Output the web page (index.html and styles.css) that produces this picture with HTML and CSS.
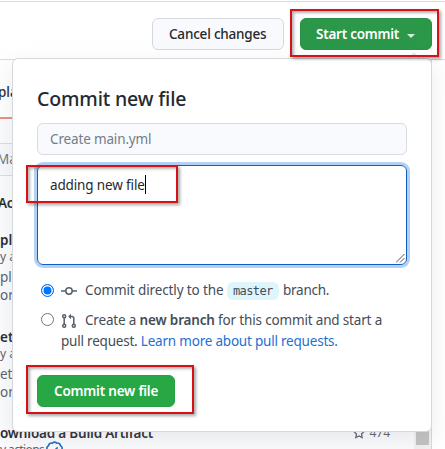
FILE: index.html
```html
<!DOCTYPE html>
<html lang="en">
<head>
<meta charset="utf-8">
<title>Commit new file</title>
<link rel="stylesheet" href="styles.css">
</head>
<body>
<header class="toolbar">
  <button class="btn"><span class="t-cancel">Cancel changes</span></button>
  <button class="btn primary start"><span class="t-start">Start commit</span><i class="caret"></i></button>
</header>
<main class="sidebar">
  <div class="tab">pla</div>
  <div class="search">Ma</div>
  <h3 class="section">Act</h3>
  <article class="item first"><h4>ple</h4><small>y a</small><p>ple<br>or</p></article>
  <article class="item second"><h4>etu</h4><small>y a</small><p>et<br>om</p></article>
  <article class="download">
    <div class="row"><h4>ownload a Build Artifact</h4>
      <span class="stars"><svg width="12" height="12" viewBox="0 0 16 16"><path d="M8 1l2.1 4.3 4.7.7-3.4 3.3.8 4.7L8 11.8 3.8 14l.8-4.7L1.2 6l4.7-.7z" fill="none" stroke="#586069" stroke-width="1.7"/></svg>474</span></div>
    <div class="by"><span>y actions</span><svg width="17" height="17" viewBox="0 0 16 16" fill="none" stroke="#2468c8" stroke-width="1.5"><path d="M6 2Q8 0 10 2Q13 1.6 13.7 4.5Q16 6 14.8 8Q16 10 13.7 11.5Q13 14.4 10 14Q8 16 6 14Q3 14.4 2.3 11.5Q0 10 1.2 8Q0 6 2.3 4.5Q3 1.6 6 2Z"/><path d="M5 8l2 2 4-4"/></svg></div>
  </article>
  <div class="scroll"><i></i></div>
</main>
<section class="popover">
  <h2><span>Commit new file</span></h2>
  <div class="field"><span>Create main.yml</span></div>
  <div class="area"><span class="typed">adding new file</span><i class="cursor"></i>
    <svg class="grip" width="9" height="9" viewBox="0 0 9 9"><path d="M0 8.5L8.5 0M4 8.5L8.5 4" stroke="#555"/></svg></div>
  <div class="choice direct">
    <i class="radio checked"></i>
    <svg class="icon" width="16" height="16" viewBox="0 0 16 16" fill="none" stroke="#586069" stroke-width="1.5"><circle cx="8" cy="8" r="3.2"/><path d="M0 8h4.8M11.2 8H16"/></svg>
    <span class="t-direct">Commit directly to the</span><code>master</code><span class="t-branch">branch.</span>
  </div>
  <div class="choice create">
    <i class="radio"></i>
    <div>
      <div class="line"><svg class="icon" width="16" height="16" viewBox="0 0 16 16" fill="none" stroke="#586069" stroke-width="1.5"><circle cx="3.2" cy="3.2" r="1.5"/><circle cx="3.2" cy="12.8" r="1.5"/><circle cx="12.8" cy="12.8" r="1.5"/><path d="M3.2 4.8v6.4M12.8 11.2V5.5Q12.8 3.5 10.8 3.5H8"/><path d="M10 .8v5.4L7.2 3.5z" fill="#586069" stroke="none"/></svg><span class="t-create">Create a <b>new branch</b> for this commit and start a</span></div>
      <div class="line"><span class="t-pull">pull request. <a>Learn more about pull requests.</a></span></div>
    </div>
  </div>
  <button class="btn primary commit"><span class="t-commit">Commit new file</span></button>
</section>
<i class="pointer"></i>
<i class="mark mark-start"></i>
<i class="mark mark-text"></i>
<i class="mark mark-commit"></i>
</body>
</html>
```
FILE: styles.css
```css
* { box-sizing: border-box; }
body { margin: 0; width: 445px; height: 449px; overflow: hidden; position: relative; background: #fff; color: #24292e; font: 13.5px/21px "Noto Sans", "Open Sans", sans-serif; }
h2, h3, h4, p { margin: 0; }
span { white-space: nowrap; }
.toolbar { height: 59px; margin-top: 1px; border-top: 1px solid #d9dce3; border-bottom: 1px solid #d9dce3; display: flex; gap: 16px; padding: 16px 0 0 152px; }
.btn { height: 32px; width: 132px; padding: 0 0 0 16px; border: 1px solid #d5d8dc; border-radius: 6px; background: #f8fafd; color: #24292e; font: 500 13.5px/20px "Noto Sans", sans-serif; text-align: left; }
.primary { background: #2a9749; border-color: #298f46; color: #fff; font-weight: 600; }
.start { display: flex; align-items: center; padding-left: 15px; }
.caret { margin: 3px 0 0 8px; border: 4px solid transparent; border-top-color: #d9eddd; border-bottom: 0; }
.t-cancel { letter-spacing: -.2px; }
.t-start { letter-spacing: -.25px; }

.sidebar { position: relative; width: 432px; height: 389px; border-right: 1px solid #d5d8dc; background: #fcfcfe; overflow: hidden; }
.tab { height: 59px; padding-top: 22px; margin-left: -2px; border-bottom: 2px solid #ed8b80; background: #fff; font-weight: 500; }
.search { margin-top: 24px; height: 33px; padding: 5px 0; border: solid #d9dce3; border-width: 1px 0; background: #f8f9fc; color: #6a737d; margin-left: -3px; }
.section { margin: 17px 0 0 -2px; font-size: 13.5px; line-height: 21px; font-weight: 600; letter-spacing: -.2px; }
.item { height: 97px; }
.item h4, .download h4 { font-size: 13.5px; line-height: 18px; font-weight: 600; }
.item small { display: block; font-size: 12px; line-height: 15px; color: #586069; }
.item p { margin-top: 4px; font-size: 13.5px; line-height: 18px; color: #586069; }
.first { margin-top: 17px; }
.download { margin-top: -1px; }
.row { display: flex; justify-content: space-between; padding-right: 41px; }
.row h4 { letter-spacing: -.2px; }
.stars { display: flex; align-items: center; gap: 4px; font-size: 12px; line-height: 18px; color: #586069; }
.by { display: flex; gap: 2px; font-size: 12px; line-height: 15px; color: #586069; letter-spacing: -.6px; }
.by span { width: 44px; }
.by svg { margin-top: -1px; }
.scroll { position: absolute; right: 0; top: 370px; width: 17px; height: 30px; background: #f1f1f1; padding: 0 2px; }
.scroll i { display: block; height: 15px; background: #c1c1c1; }

.popover { position: absolute; left: 12px; top: 58px; width: 420px; height: 374px; padding: 29px 24px 0; border: 1px solid #d5d8dc; border-radius: 6px; background: #fff; box-shadow: 0 8px 24px rgba(149,157,165,.2); }
h2 { height: 35px; font-size: 19.5px; line-height: 22px; font-weight: 500; letter-spacing: -.15px; }
.field { width: 370px; height: 32px; padding: 5px 12px; border: 1px solid #d9dce3; border-radius: 6px; background: #f8fafd; color: #747c85; line-height: 20px; letter-spacing: -.15px; }
.area { position: relative; display: flex; margin-top: 10px; width: 370px; height: 100px; padding: 9px 12px; border: 1px solid #0f5fc9; border-radius: 6px; box-shadow: 0 0 0 3px #b3d1f3; line-height: 20px; }
.typed { letter-spacing: -.14px; }
.cursor { width: 1px; height: 19px; background: #000; }
.grip { position: absolute; right: 1px; bottom: 1px; }
.choice { display: flex; color: #444d56; }
.direct { margin-top: 15px; height: 21px; align-items: center; padding-left: 4px; }
.radio { flex: none; width: 13px; height: 13px; border: 1px solid #767676; border-radius: 50%; margin-right: 7px; }
.checked { border-color: #0075ff; background: #0075ff; box-shadow: inset 0 0 0 1.5px #fff; }
.icon { flex: none; margin-right: 8px; }
.t-direct { width: 138px; letter-spacing: -.12px; }
.t-branch { letter-spacing: -.25px; }
code { width: 52px; height: 18px; padding: 0 6px; margin: 0 4px; border-radius: 6px; background: #dff5fc; color: #444d56; font: 12px/18px "DejaVu Sans Mono", monospace; letter-spacing: -.6px; }
.create { margin-top: 9px; padding-left: 4px; }
.create .radio { margin-top: 3px; }
.t-create { letter-spacing: -.17px; }
.t-pull { letter-spacing: -.21px; }
.line { display: flex; align-items: center; height: 21px; }
.line b { font-weight: 600; }
a { color: #2470d0; }
.commit { display: block; margin-top: 23px; width: 138px; background: #28a745; border-color: #279f43; }
.t-commit { letter-spacing: -.2px; }

.pointer { position: absolute; left: 410px; top: 54px; width: 8px; height: 8px; border: solid #d5d8dc; border-width: 1px 0 0 1px; background: #fff; transform: rotate(45deg); clip-path: polygon(0 0, 100% 0, 0 100%); }
.mark { position: absolute; border: 2px solid #d51317; box-shadow: 2px 2px 3px rgba(0,0,0,.35), inset 2px 2px 3px rgba(0,0,0,.3); }
.mark-start { left: 290px; top: 9px; width: 149px; height: 48px; }
.mark-text { left: 26px; top: 165px; width: 152px; height: 38px; }
.mark-commit { left: 26px; top: 365px; width: 168px; height: 49px; }
```
